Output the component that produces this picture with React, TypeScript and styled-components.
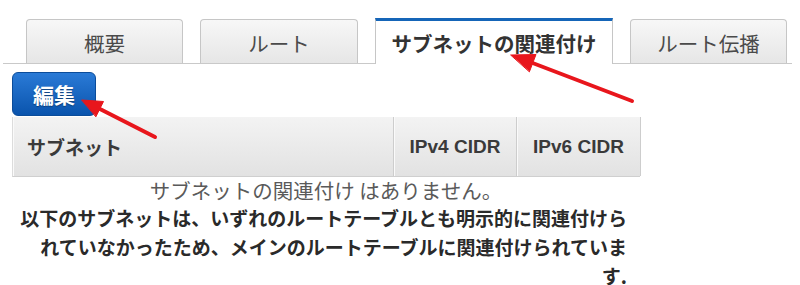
import React from "react";
import styled, { createGlobalStyle } from "styled-components";

const Global = createGlobalStyle`
  html, body { margin: 0; padding: 0; background: #fff; }
  body {
    font-family: "Liberation Sans", "Noto Sans CJK JP", sans-serif;
    color: #333;
    width: 800px;
    height: 285px;
    overflow: hidden;
  }
`;

const Page = styled.div`
  position: relative;
  width: 800px;
  height: 285px;
  padding-top: 19px;
  box-sizing: border-box;
`;

const TabBar = styled.div`
  display: flex;
  align-items: flex-end;
  gap: 17px;
  margin-left: 3px;
  width: 789px;
  height: 45px;
  padding-left: 23px;
  box-sizing: border-box;
  border-bottom: 1px solid #c9c9c9;
`;

const Tab = styled.div<{ $active?: boolean; $w: number }>`
  box-sizing: border-box;
  width: ${(p) => p.$w}px;
  height: ${(p) => (p.$active ? 46 : 44)}px;
  margin-bottom: ${(p) => (p.$active ? -1 : 0)}px;
  display: flex;
  align-items: center;
  justify-content: center;
  font-family: "Noto Sans CJK JP", sans-serif;
  font-size: 20.5px;
  font-weight: ${(p) => (p.$active ? 700 : 400)};
  color: ${(p) => (p.$active ? "#333" : "#4a4a4a")};
  border: 1px solid #c6c6c6;
  border-bottom: none;
  border-top: ${(p) => (p.$active ? "3px solid #1565b8" : "1px solid #c6c6c6")};
  border-radius: ${(p) => (p.$active ? "0" : "4px 4px 0 0")};
  background: ${(p) =>
    p.$active ? "#fff" : "linear-gradient(#f7f7f7, #e6e6e6)"};
  padding-top: ${(p) => (p.$active ? 0 : 2)}px;
`;

const EditButton = styled.button`
  display: flex;
  align-items: center;
  justify-content: center;
  margin: 8px 0 0 12px;
  width: 84px;
  height: 44px;
  border: 1px solid #0b4c9a;
  border-radius: 6px;
  background: linear-gradient(#2a7ad6, #0a54ad);
  color: #fff;
  font-family: "Noto Sans CJK JP", sans-serif;
  font-size: 21px;
  font-weight: 700;
  text-shadow: 0 1px 1px rgba(0, 0, 0, 0.35);
  padding: 0;
  cursor: pointer;
`;

const Table = styled.div`
  margin: 1px 0 0 12px;
  width: 628px;
`;

const HeaderRow = styled.div`
  display: grid;
  grid-template-columns: 381px 123px 124px;
  height: 60px;
  box-sizing: border-box;
  border-bottom: 1px solid #cfcfcf;
  border-left: 1px solid #dcdcdc;
  background: linear-gradient(#f3f3f3, #e2e2e2);
`;

const HeaderCell = styled.div<{ $align?: "left" | "center" }>`
  display: flex;
  align-items: center;
  justify-content: ${(p) => (p.$align === "center" ? "center" : "flex-start")};
  padding-left: ${(p) => (p.$align === "center" ? 0 : 14)}px;
  border-right: 1px solid #cdcdcd;
  box-shadow: inset 1px 0 0 #fafafa;
  font-size: 19px;
  font-weight: 700;
  color: #3a3a3a;
  font-family: "Liberation Sans", "Noto Sans CJK JP", sans-serif;
`;

const Empty = styled.div`
  width: 628px;
  margin-left: 12px;
  text-align: center;
  font-family: "Noto Sans CJK JP", sans-serif;
  font-size: 20.5px;
  line-height: 25px;
  color: #5a5a5a;
  padding-top: 1px;
`;

const Note = styled.p`
  margin: 0 0 0 17px;
  width: 610px;
  text-align: right;
  font-family: "Noto Sans CJK JP", sans-serif;
  font-size: 19px;
  font-weight: 700;
  line-height: 29px;
  color: #2a2a2a;
`;

const Overlay = styled.svg`
  position: absolute;
  left: 0;
  top: 0;
  pointer-events: none;
`;

export default function App() {
  return (
    <>
      <Global />
      <Page>
        <TabBar>
          <Tab $w={157}>概要</Tab>
          <Tab $w={158}>ルート</Tab>
          <Tab $w={238} $active>
            サブネットの関連付け
          </Tab>
          <Tab $w={157}>ルート伝播</Tab>
        </TabBar>
        <EditButton>編集</EditButton>
        <Table>
          <HeaderRow>
            <HeaderCell>サブネット</HeaderCell>
            <HeaderCell $align="center">IPv4 CIDR</HeaderCell>
            <HeaderCell $align="center">IPv6 CIDR</HeaderCell>
          </HeaderRow>
        </Table>
        <Empty>サブネットの関連付け はありません。</Empty>
        <Note>
          以下のサブネットは、いずれのルートテーブルとも明示的に関連付けられていなかったため、メインのルートテーブルに関連付けられています.
        </Note>
        <Overlay width={800} height={285} viewBox="0 0 800 285">
          <g fill="#e8161c" stroke="#e8161c" strokeLinecap="round">
            <line x1={155} y1={137} x2={98} y2={108} strokeWidth={4} />
            <polygon points="82,100 103.5,101.5 96,116.5" strokeWidth={1} strokeLinejoin="round" />
            <line x1={632} y1={101} x2={530} y2={62} strokeWidth={4} />
            <polygon points="511,55 536,54.5 529.5,71.5" strokeWidth={1} strokeLinejoin="round" />
          </g>
        </Overlay>
      </Page>
    </>
  );
}
